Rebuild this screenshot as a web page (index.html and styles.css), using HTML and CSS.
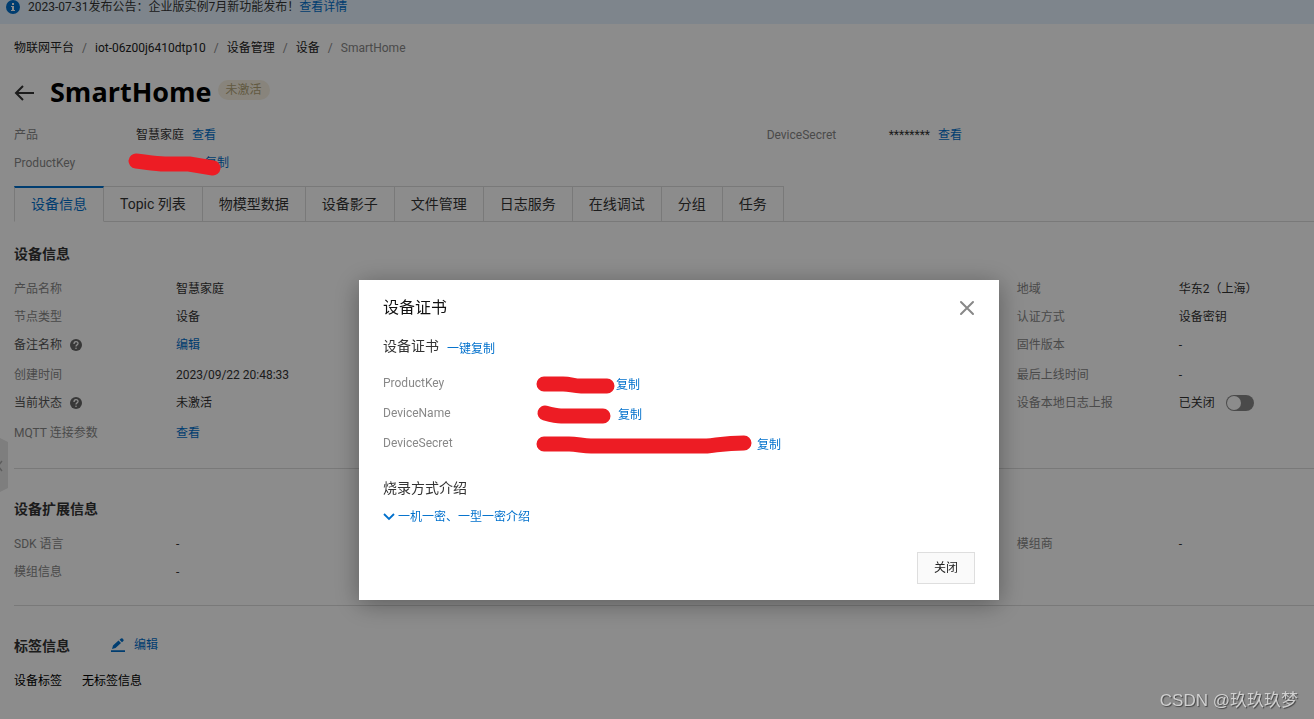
FILE: index.html
```html
<!DOCTYPE html>
<html lang="zh-CN">
<head>
<meta charset="utf-8">
<meta name="viewport" content="width=device-width, initial-scale=1">
<title>SmartHome - 设备证书</title>
<link rel="stylesheet" href="styles.css">
</head>
<body>
<div class="notice">
  <svg class="notice-icon" viewBox="0 0 14 14" aria-hidden="true"><circle cx="7" cy="7" r="7" fill="#0070cc"/><path d="M6 3h2v2H6zM5 6h3v4h1v1H5v-1h1V7H5z" fill="#fff"/></svg>
  <span>2023-07-31发布公告：企业版实例7月新功能发布！<a href="#">查看详情</a></span>
</div>

<main class="page">
  <nav class="crumbs" aria-label="breadcrumb">
    <a href="#">物联网平台</a><span class="sep">/</span><a href="#">iot-06z00j6410dtp10</a><span class="sep">/</span><a href="#">设备管理</a><span class="sep">/</span><a href="#">设备</a><span class="sep">/</span><span class="here">SmartHome</span>
  </nav>

  <header class="title">
    <button class="back" type="button" aria-label="返回"><svg viewBox="0 0 20 16" aria-hidden="true"><path d="M20 8H2M9 1L2 8l7 7" fill="none" stroke="#333" stroke-width="2"/></svg></button>
    <h1>SmartHome</h1>
    <span class="tag">未激活</span>
  </header>

  <div class="summary">
    <dl class="list brief">
      <div class="row"><dt>产品</dt><dd>智慧家庭<a href="#">查看</a></dd></div>
      <div class="row"><dt>ProductKey</dt><dd><span class="masked"><svg class="scribble" viewBox="0 0 94 24" aria-hidden="true"><path d="M8 8C18 9 26 11 37 11H61L85 15" fill="none" stroke="#ed1c24" stroke-width="15" stroke-linecap="round" stroke-linejoin="round"/></svg></span><a href="#">复制</a></dd></div>
    </dl>
    <dl class="list brief">
      <div class="row"><dt>DeviceSecret</dt><dd>********<a href="#">查看</a></dd></div>
    </dl>
  </div>

  <div class="tabs" role="tablist">
    <button type="button" role="tab" aria-selected="true" class="tab active">设备信息</button>
    <button type="button" role="tab" class="tab">Topic 列表</button>
    <button type="button" role="tab" class="tab">物模型数据</button>
    <button type="button" role="tab" class="tab">设备影子</button>
    <button type="button" role="tab" class="tab">文件管理</button>
    <button type="button" role="tab" class="tab">日志服务</button>
    <button type="button" role="tab" class="tab">在线调试</button>
    <button type="button" role="tab" class="tab">分组</button>
    <button type="button" role="tab" class="tab">任务</button>
  </div>

  <section class="section first">
    <h2>设备信息</h2>
    <div class="columns">
      <dl class="list">
        <div class="row"><dt>产品名称</dt><dd>智慧家庭</dd></div>
        <div class="row"><dt>节点类型</dt><dd>设备</dd></div>
        <div class="row tall"><dt class="strong">备注名称<svg class="help" viewBox="0 0 12 12" aria-hidden="true"><circle cx="6" cy="6" r="6" fill="#666"/><path d="M4 5c0-3 4-3 4-.5C8 6 6 5.800 6 7.500" fill="none" stroke="#fff" stroke-width="1.300"/><circle cx="6" cy="9.300" r=".8" fill="#fff"/></svg></dt><dd><a href="#">编辑</a></dd></div>
        <div class="row"><dt>创建时间</dt><dd>2023/09/22 20:48:33</dd></div>
        <div class="row tall"><dt class="strong">当前状态<svg class="help" viewBox="0 0 12 12" aria-hidden="true"><circle cx="6" cy="6" r="6" fill="#666"/><path d="M4 5c0-3 4-3 4-.5C8 6 6 5.800 6 7.500" fill="none" stroke="#fff" stroke-width="1.300"/><circle cx="6" cy="9.300" r=".8" fill="#fff"/></svg></dt><dd>未激活</dd></div>
        <div class="row"><dt>MQTT 连接参数</dt><dd><a href="#">查看</a></dd></div>
      </dl>
      <dl class="list last">
        <div class="row"><dt>地域</dt><dd>华东2（上海）</dd></div>
        <div class="row"><dt>认证方式</dt><dd>设备密钥</dd></div>
        <div class="row tall"><dt>固件版本</dt><dd>-</dd></div>
        <div class="row"><dt>最后上线时间</dt><dd>-</dd></div>
        <div class="row tall"><dt><label for="log-report">设备本地日志上报</label></dt><dd>已关闭<input class="switch" type="checkbox" role="switch" id="log-report"></dd></div>
      </dl>
    </div>
  </section>

  <section class="section">
    <h2>设备扩展信息</h2>
    <div class="columns">
      <dl class="list">
        <div class="row"><dt>SDK 语言</dt><dd>-</dd></div>
        <div class="row"><dt>模组信息</dt><dd>-</dd></div>
      </dl>
      <dl class="list last">
        <div class="row"><dt>模组商</dt><dd>-</dd></div>
      </dl>
    </div>
  </section>

  <section class="section">
    <div class="tag-head">
      <h2>标签信息</h2>
      <a class="edit" href="#"><svg viewBox="0 0 14 14" aria-hidden="true"><path d="M0 12.200h14V14H0zM1 11l1-3.500L7.500 2.500l2.500 2.500L4.500 10zM8.500 1.800L10 .6q.8-.6 1.600 0l.8.8q.6.800 0 1.500L11 4.300z" fill="#0070cc"/></svg>编辑</a>
    </div>
    <p class="tag-row"><span>设备标签</span><span>无标签信息</span></p>
  </section>
</main>

<button class="handle" type="button" aria-label="展开"><svg viewBox="0 0 8 54" aria-hidden="true"><path d="M0 0l8 4v46l-8 4z" fill="#e6e6e6"/><path d="M2 23l-4 5 4 5" fill="none" stroke="#aaa" stroke-width="1.500"/></svg></button>

<div class="overlay">
  <div class="dialog" role="dialog" aria-modal="true" aria-labelledby="dialog-title">
    <div class="dialog-head">
      <h2 id="dialog-title">设备证书</h2>
      <button class="close" type="button" aria-label="关闭对话框"><svg viewBox="0 0 16 16" aria-hidden="true"><path d="M2 2l12 12M14 2L2 14" fill="none" stroke="#888" stroke-width="2" stroke-linecap="round"/></svg></button>
    </div>
    <div class="sub"><h3>设备证书</h3><a href="#">一键复制</a></div>
    <dl class="cert">
      <div class="cert-row key-row"><dt>ProductKey</dt><dd><svg class="key" viewBox="0 0 77 18" aria-hidden="true"><path d="M7 8H26C34 8 36 10 44 10H70" fill="none" stroke="#ed1c24" stroke-width="15" stroke-linecap="round"/></svg><a href="#">复制</a></dd></div>
      <div class="cert-row"><dt>DeviceName</dt><dd><svg class="name" viewBox="0 0 73 18" aria-hidden="true"><path d="M8 7Q19 10 24 10H66" fill="none" stroke="#ed1c24" stroke-width="15" stroke-linecap="round"/></svg><a href="#">复制</a></dd></div>
      <div class="cert-row"><dt>DeviceSecret</dt><dd><svg class="secret" viewBox="0 0 212 18" aria-hidden="true"><path d="M7 8H32C40 8 46 10 54 10H170C181 9 189 7 207 7" fill="none" stroke="#ed1c24" stroke-width="15" stroke-linecap="round"/></svg><a href="#">复制</a></dd></div>
    </dl>
    <h3>烧录方式介绍</h3>
    <a class="more" href="#"><svg viewBox="0 0 12 8" aria-hidden="true"><path d="M1 1l5 5 5-5" fill="none" stroke="#0070cc" stroke-width="1.800"/></svg>一机一密、一型一密介绍</a>
    <div class="dialog-foot"><button class="btn" type="button">关闭</button></div>
  </div>
</div>
<div class="watermark">CSDN @玖玖玖梦</div>
</body>
</html>
```

FILE: styles.css
```css
* { box-sizing: border-box; }

body {
  margin: 0;
  min-height: 100vh;
  position: relative;
  overflow: hidden;
  background: #fff;
  color: #333;
  font: 12px/20px Roboto, "Noto Sans CJK SC", sans-serif;
}

h1, h2, h3, p, dl, dd { margin: 0; }
a { color: #0070cc; text-decoration: none; }
button { font: inherit; color: inherit; background: none; border: 0; padding: 0; cursor: pointer; }
svg { display: block; flex: none; overflow: visible; }

.notice {
  display: flex;
  gap: 8px;
  padding: 0 6px 10px;
  line-height: 14px;
  background: #e5f3ff;
}
.notice-icon { width: 14px; height: 14px; }

.page { padding: 14px 0 28px 14px; }

.crumbs { display: flex; }
.crumbs a { color: #222; }
.crumbs .sep { width: 21px; text-align: center; color: #888; }
.crumbs .here { color: #888; }

.title {
  display: flex;
  align-items: center;
  gap: 16px;
  padding: 16px 0;
  height: 67px;
}
.back { margin-top: 2px; }
.back svg { width: 20px; height: 16px; }
.title h1 { font-family: "Open Sans", sans-serif; font-size: 27px; line-height: 36px; color: #000; }
.tag {
  margin: 0 0 4px -10px;
  padding: 0 8px;
  border-radius: 10px;
  background: #f7f1e2;
  color: #b3a477;
}

.summary { display: grid; grid-template-columns: 11fr 8fr; }
.columns { display: grid; grid-template-columns: 27fr 27fr 16fr; }
.last { grid-column: 3; }

.row { display: flex; min-height: 28px; }
.row.tall { min-height: 30px; }
.row dt { display: flex; align-items: center; height: 20px; width: 162px; flex: none; color: #888; }
.row dt.strong { color: #555; }
.row dd { display: flex; align-items: center; height: 20px; white-space: nowrap; }
.brief dt { width: 122px; }
.brief dd { gap: 8px; }
.help { width: 12px; height: 12px; margin-left: 8px; }

.masked { position: relative; width: 61px; height: 20px; }
.scribble {
  position: absolute;
  left: -8px;
  top: 0;
  z-index: 20;
  width: 94px;
  height: 24px;
}

.switch {
  appearance: none;
  width: 28px;
  height: 16px;
  margin: 0 0 0 11px;
  padding: 1px;
  border-radius: 8px;
  background: #888;
}
.switch::before {
  content: "";
  display: block;
  width: 14px;
  height: 14px;
  border-radius: 50%;
  background: #fff;
}

.tabs { display: flex; margin-top: 5px; border-bottom: 1px solid #dcdcdc; }
.tab {
  height: 36px;
  margin-bottom: -1px;
  padding: 0 16px;
  border: 1px solid #dcdcdc;
  border-left-width: 0;
  font-size: 14px;
}
.tab.active {
  border-left-width: 1px;
  border-top: 2px solid #0070cc;
  border-bottom-color: #fff;
  padding-bottom: 1px;
  color: #0070cc;
}

.section { padding: 30px 0 15px; }
.section.first { padding-top: 22px; padding-bottom: 17px; }
.section + .section { border-top: 1px solid #dcdcdc; }
.section h2 { margin-bottom: 15px; font-size: 14px; line-height: 20px; }
.tag-head { display: flex; gap: 41px; }
.edit { display: flex; align-items: center; gap: 9px; height: 18px; }
.edit svg { width: 14px; height: 14px; }
.tag-row { display: flex; gap: 20px; color: #000; }

.handle { position: absolute; left: 0; top: 438px; overflow: hidden; }
.handle svg { width: 8px; height: 54px; }

.overlay {
  position: fixed;
  inset: 0;
  z-index: 10;
  display: flex;
  justify-content: center;
  align-items: center;
  padding: 161px 0 0 44px;
  background: rgba(0, 0, 0, 0.45);
}
.dialog {
  width: 640px;
  padding: 16px 24px;
  background: #fff;
  box-shadow: 0 4px 24px rgba(0, 0, 0, 0.35);
}
.dialog-head { display: flex; justify-content: space-between; align-items: center; }
.dialog-head h2 { font-size: 16px; line-height: 24px; font-weight: 400; color: #111; }
.close svg { width: 16px; height: 16px; }
.dialog h3 { font-size: 14px; line-height: 20px; font-weight: 400; }
.sub { display: flex; align-items: flex-end; gap: 8px; margin-top: 16px; height: 23px; }
.sub h3 { align-self: flex-start; }
.cert { margin: 14px 0 15px; }
.cert-row { display: flex; height: 30px; }
.cert-row dt { width: 154px; color: #888; }
.cert-row dd { display: flex; align-items: center; gap: 8px; height: 23px; }
.key-row dd { gap: 2px; }
.key { width: 77px; height: 18px; }
.name { width: 73px; height: 18px; }
.secret { width: 212px; height: 18px; }
.more { display: flex; align-items: center; gap: 3px; margin-top: 9px; }
.more svg { width: 12px; height: 8px; }
.dialog-foot { display: flex; justify-content: flex-end; margin-top: 25px; }
.btn { height: 32px; padding: 0 16px; border: 1px solid #dedede; background: #fafafa; color: #222; }

.watermark {
  position: fixed;
  right: 16px;
  bottom: 6px;
  z-index: 30;
  font-family: "Liberation Sans", "Noto Sans CJK SC", sans-serif;
  font-size: 17px;
  line-height: 24px;
  color: #d0d0d0;
  text-shadow: 1px 1px 1px #444;
}
```
